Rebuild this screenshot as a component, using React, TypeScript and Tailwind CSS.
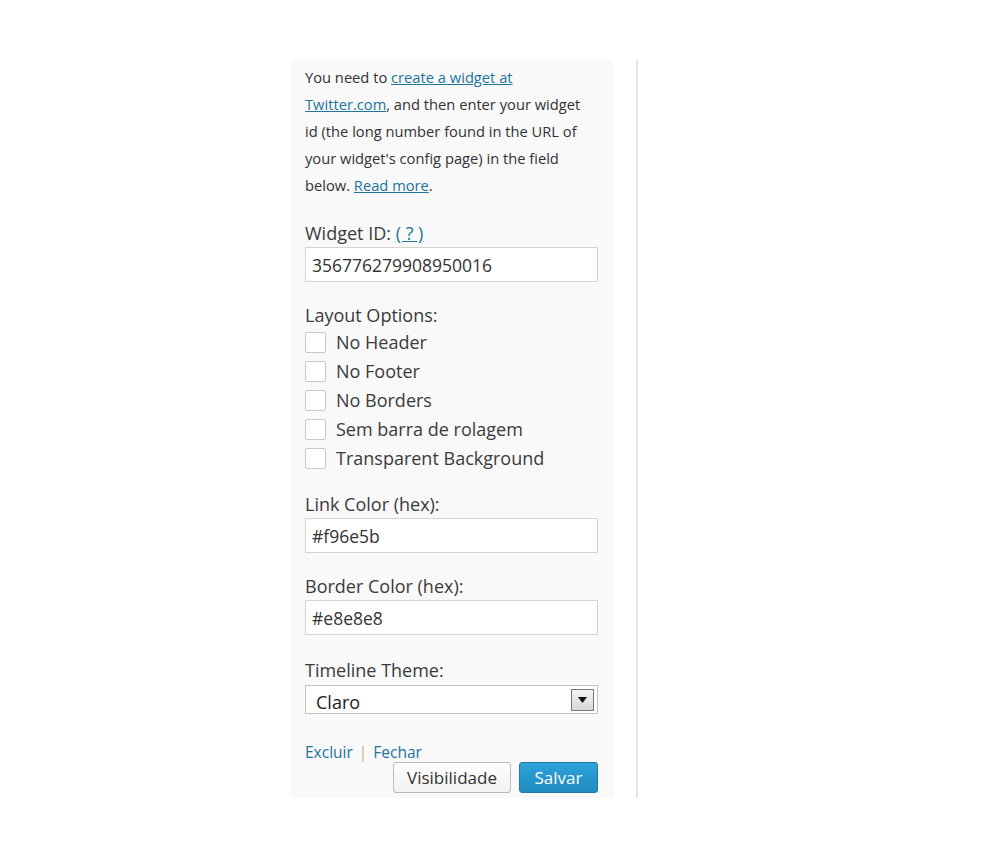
import React from "react";

const options = [
  "No Header",
  "No Footer",
  "No Borders",
  "Sem barra de rolagem",
  "Transparent Background",
];

function TextField({ label, value }: { label: React.ReactNode; value: string }) {
  return (
    <div>
      <label className="block text-[18px] leading-[22px] text-[#3b3b3b]">{label}</label>
      <input
        readOnly
        value={value}
        className="mt-[3px] block h-[35px] w-[293px] border border-[#d4d4d4] bg-white px-[6px] text-[17.5px] text-[#333] outline-none"
        style={{ fontFamily: "'Open Sans', sans-serif" }}
      />
    </div>
  );
}

export default function App() {
  return (
    <div
      className="min-h-[849px] w-[984px] bg-white pt-[60px] pl-[291px]"
      style={{ fontFamily: "'Open Sans', 'DejaVu Sans', sans-serif" }}
    >
      <div className="flex items-stretch">
        {/* Widget form */}
        <div className="w-[323px] bg-[#f9f9f9] pt-[4px] pr-[16px] pb-[5px] pl-[14px]">
          <p className="text-[14.7px] leading-[27px] whitespace-nowrap text-[#333]">
            You need to{" "}
            <a href="#" className="text-[#21759b] underline">
              create a widget at
              <br />
              Twitter.com
            </a>
            , and then enter your widget
            <br />
            id (the long number found in the URL of
            <br />
            your widget's config page) in the field
            <br />
            below.{" "}
            <a href="#" className="text-[#21759b] underline">
              Read more
            </a>
            .
          </p>

          <div className="mt-[23px]">
            <TextField
              label={
                <>
                  Widget ID:{" "}
                  <a href="#" className="text-[#21759b] underline">
                    ( ? )
                  </a>
                </>
              }
              value="356776279908950016"
            />
          </div>

          <div className="mt-[22px]">
            <div className="text-[18px] leading-[22px] text-[#3b3b3b]">Layout Options:</div>
            <div className="mt-[2px]">
              {options.map((o) => (
                <label key={o} className="flex h-[29px] items-center">
                  <span className="h-[21px] w-[21px] rounded-[2px] border border-[#c8c8c8] bg-white" />
                  <span className="ml-[10px] text-[18px] text-[#3b3b3b]">{o}</span>
                </label>
              ))}
            </div>
          </div>

          <div className="mt-[20px]">
            <TextField label="Link Color (hex):" value="#f96e5b" />
          </div>

          <div className="mt-[22px]">
            <TextField label="Border Color (hex):" value="#e8e8e8" />
          </div>

          <div className="mt-[24px]">
            <div className="text-[18px] leading-[22px] text-[#3b3b3b]">Timeline Theme:</div>
            <div className="mt-[4px] flex h-[29px] w-[293px] items-center justify-between border border-[#c4c4c4] bg-white pl-[10px] pr-[3px]">
              <span className="mt-[5px] text-[18px] text-[#222]">Claro</span>
              <span className="flex h-[22px] w-[23px] items-center justify-center border border-[#777] bg-gradient-to-b from-[#f4f4f4] to-[#d8d8d8]">
                <svg width="9" height="6" viewBox="0 0 9 6">
                  <path d="M0 0h9L4.5 6z" fill="#111" />
                </svg>
              </span>
            </div>
          </div>

          <div className="mt-[29px] text-[15.5px] leading-[18px]">
            <a href="#" className="text-[#21759b]">
              Excluir
            </a>
            <span className="mx-[6px] text-[#cdb07a]">|</span>
            <a href="#" className="text-[#21759b]">
              Fechar
            </a>
          </div>

          <div className="mt-[1px] flex justify-end gap-[8px]">
            <button className="h-[31px] w-[118px] rounded-[3px] border border-[#bbb] bg-gradient-to-b from-[#fefefe] to-[#f1f1f1] text-[17px] text-[#333]">
              Visibilidade
            </button>
            <button className="h-[31px] w-[79px] rounded-[3px] border border-[#1e7aa8] bg-gradient-to-b from-[#2ea2d8] to-[#1e8cbe] text-[17px] text-white">
              Salvar
            </button>
          </div>
        </div>

        {/* Sidebar divider */}
        <div className="ml-[22px] w-[2px] bg-[#e3e3e3]" />
      </div>
    </div>
  );
}
